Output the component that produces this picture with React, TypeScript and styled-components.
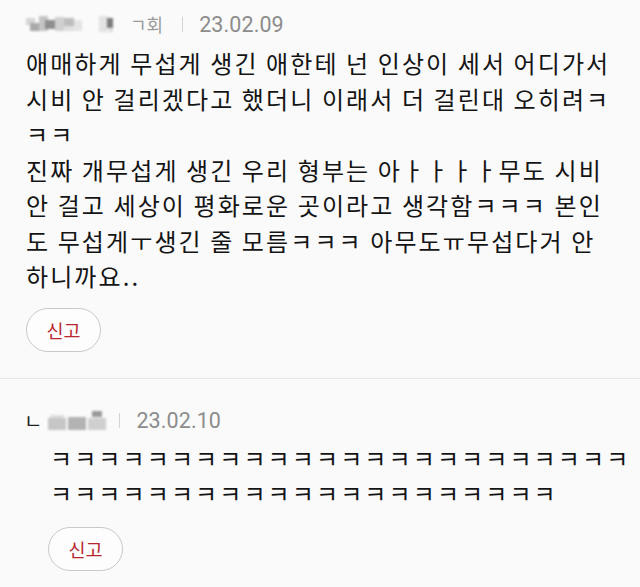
import React from 'react';
import styled, {createGlobalStyle} from 'styled-components';

const GlobalStyle = createGlobalStyle`
  html, body {
    margin: 0;
    padding: 0;
    background: #fafafa;
  }
  body {
    font-family: "Noto Sans CJK KR", "Noto Sans", sans-serif;
    color: #1b1b1b;
  }
`;

const Page = styled.div`
  width: 640px;
  min-height: 587px;
  background: #fafafa;
  overflow: hidden;
`;

const CommentBlock = styled.section<{$reply?: boolean}>`
  padding: ${props => (props.$reply ? '26px 0 0 24px' : '8px 0 26px 26px')};
`;

const Meta = styled.div`
  display: flex;
  align-items: center;
  height: 32px;
`;

const ReplyMark = styled.span`
  font-size: 20px;
  color: #222;
  margin-right: 6px;
  line-height: 1;
`;

const NickTail = styled.span`
  font-size: 18px;
  color: #9a9a9a;
  margin-left: 16px;
`;

const Separator = styled.span<{$left: number}>`
  width: 1px;
  height: 15px;
  background: #d4d4d4;
  margin: 0 16px 0 ${props => props.$left}px;
`;

const DateText = styled.span`
  font-family: Roboto, "Noto Sans", sans-serif;
  font-size: 21.5px;
  color: #8c8c8c;
  letter-spacing: 0.1px;
`;

const Body = styled.p<{$indent?: number}>`
  margin: 5px 0 0 ${props => props.$indent ?? 0}px;
  font-size: 24px;
  line-height: 35.5px;
  letter-spacing: 2.1px;
  white-space: pre;
  color: #141414;
`;

const ReportButton = styled.button<{$indent?: number}>`
  display: flex;
  align-items: center;
  justify-content: center;
  width: 75px;
  height: 44px;
  margin: 14px 0 0 ${props => props.$indent ?? 0}px;
  border: 1px solid #c9c9c9;
  border-radius: 22px;
  background: #fdfdfd;
  font-family: "Noto Sans CJK KR", sans-serif;
  font-size: 18.5px;
  color: #b8262f;
  padding: 0;
`;

const Divider = styled.hr`
  margin: 0;
  border: none;
  height: 1px;
  background: #e6e6e6;
`;

const Spacer = styled.span<{$w: number}>`
  width: ${props => props.$w}px;
`;

type Cell = [number, number, number, number, string];

const Mosaic: React.FC<{width: number; height: number; cells: Cell[]}> = ({width, height, cells}) => (
  <svg width={width} height={height} viewBox={`0 0 ${width} ${height}`} style={{filter: 'blur(0.8px)'}}>
    {cells.map(([x, y, w, h, c], i) => (
      <rect key={i} x={x} y={y} width={w} height={h} fill={c}/>
    ))}
  </svg>
);

const nickOne: Cell[] = [
  [0, 4, 9, 7, '#d6d6d6'],
  [4, 9, 9, 8, '#a9a9a9'],
  [13, 2, 9, 15, '#c4c4c4'],
  [19, 6, 10, 9, '#8e8e8e'],
  [29, 3, 9, 14, '#d0d0d0'],
  [38, 4, 10, 9, '#bdbdbd'],
  [38, 12, 10, 5, '#e0e0e0'],
  [48, 6, 8, 11, '#e4e4e4'],
];

const nickTwo: Cell[] = [
  [0, 2, 9, 16, '#e2e2e2'],
  [8, 4, 6, 10, '#7d7d7d'],
  [10, 15, 4, 3, '#d8d8d8'],
];

const nickReply: Cell[] = [
  [0, 7, 18, 12, '#c6c6c6'],
  [2, 4, 14, 3, '#dedede'],
  [20, 6, 18, 13, '#b3b3b3'],
  [40, 7, 18, 12, '#cfcfcf'],
  [44, 0, 10, 6, '#9a9a9a'],
];

const firstText = [
  '애매하게 무섭게 생긴 애한테 넌 인상이 세서 어디가서',
  '시비 안 걸리겠다고 했더니 이래서 더 걸린대 오히려ㅋ',
  'ㅋㅋ',
  '진짜 개무섭게 생긴 우리 형부는 아ㅏㅏㅏㅏ무도 시비',
  '안 걸고 세상이 평화로운 곳이라고 생각함ㅋㅋㅋ 본인',
  '도 무섭게ㅜ생긴 줄 모름ㅋㅋㅋ 아무도ㅠ무섭다거 안',
  '하니까요..',
].join('\n');

const replyText = ['ㅋ'.repeat(24), 'ㅋ'.repeat(21)].join('\n');

const App: React.FC = () => {
  return (
    <Page>
      <GlobalStyle/>
      <CommentBlock>
        <Meta>
          <Mosaic width={56} height={20} cells={nickOne}/>
          <Spacer $w={17}/>
          <Mosaic width={15} height={20} cells={nickTwo}/>
          <NickTail>ㄱ회</NickTail>
          <Separator $left={19}/>
          <DateText>23.02.09</DateText>
        </Meta>
        <Body>{firstText}</Body>
        <ReportButton>신고</ReportButton>
      </CommentBlock>
      <Divider/>
      <CommentBlock $reply>
        <Meta>
          <ReplyMark>ㄴ</ReplyMark>
          <Mosaic width={58} height={20} cells={nickReply}/>
          <Separator $left={13}/>
          <DateText>23.02.10</DateText>
        </Meta>
        <Body $indent={26} style={{marginTop: 3}}>{replyText}</Body>
        <ReportButton $indent={24} style={{marginTop: 16}}>신고</ReportButton>
      </CommentBlock>
    </Page>
  );
};

export default App;
